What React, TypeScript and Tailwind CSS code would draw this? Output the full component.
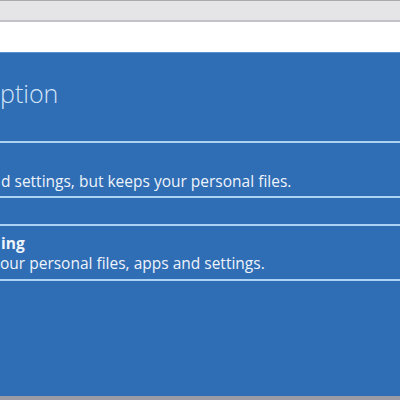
import React from "react";

export default function App() {
  return (
    <div
      className="w-[400px] h-[400px] overflow-hidden flex flex-col bg-[#2f6db5]"
      style={{ fontFamily: '"Open Sans", "Noto Sans", sans-serif' }}
    >
      <div className="h-[22px] shrink-0 bg-[#e5e5e8] border-t border-[#a9a9ae] border-b-2 border-b-[#c2c2c7]" />
      <div className="h-[30px] shrink-0 bg-white" />
      <div className="flex-1 flex flex-col bg-[#2f6db5] border-t border-[#5b93d2] whitespace-nowrap">
        <div className="pt-[24px] text-[25px] leading-[32px] font-light text-[#d3e6f8]">
          ption
        </div>
        <div className="mt-[32px] h-[57px] border-y-2 border-[#acd3f3] pt-[28px] pl-[1px] text-[15.5px] leading-[20px] text-[#eef4fb]">
          d settings, but keeps your personal files.
        </div>
        <div className="mt-[26px] h-[57px] border-y-2 border-[#acd3f3] pt-[7px] text-[15.5px] leading-[20px] text-[#eef4fb]">
          <div className="pl-[1px] font-bold">ing</div>
          <div>our personal files, apps and settings.</div>
        </div>
        <div className="flex-1" />
        <div className="h-[4px] shrink-0 bg-[#9b9ba5]" />
      </div>
    </div>
  );
}
